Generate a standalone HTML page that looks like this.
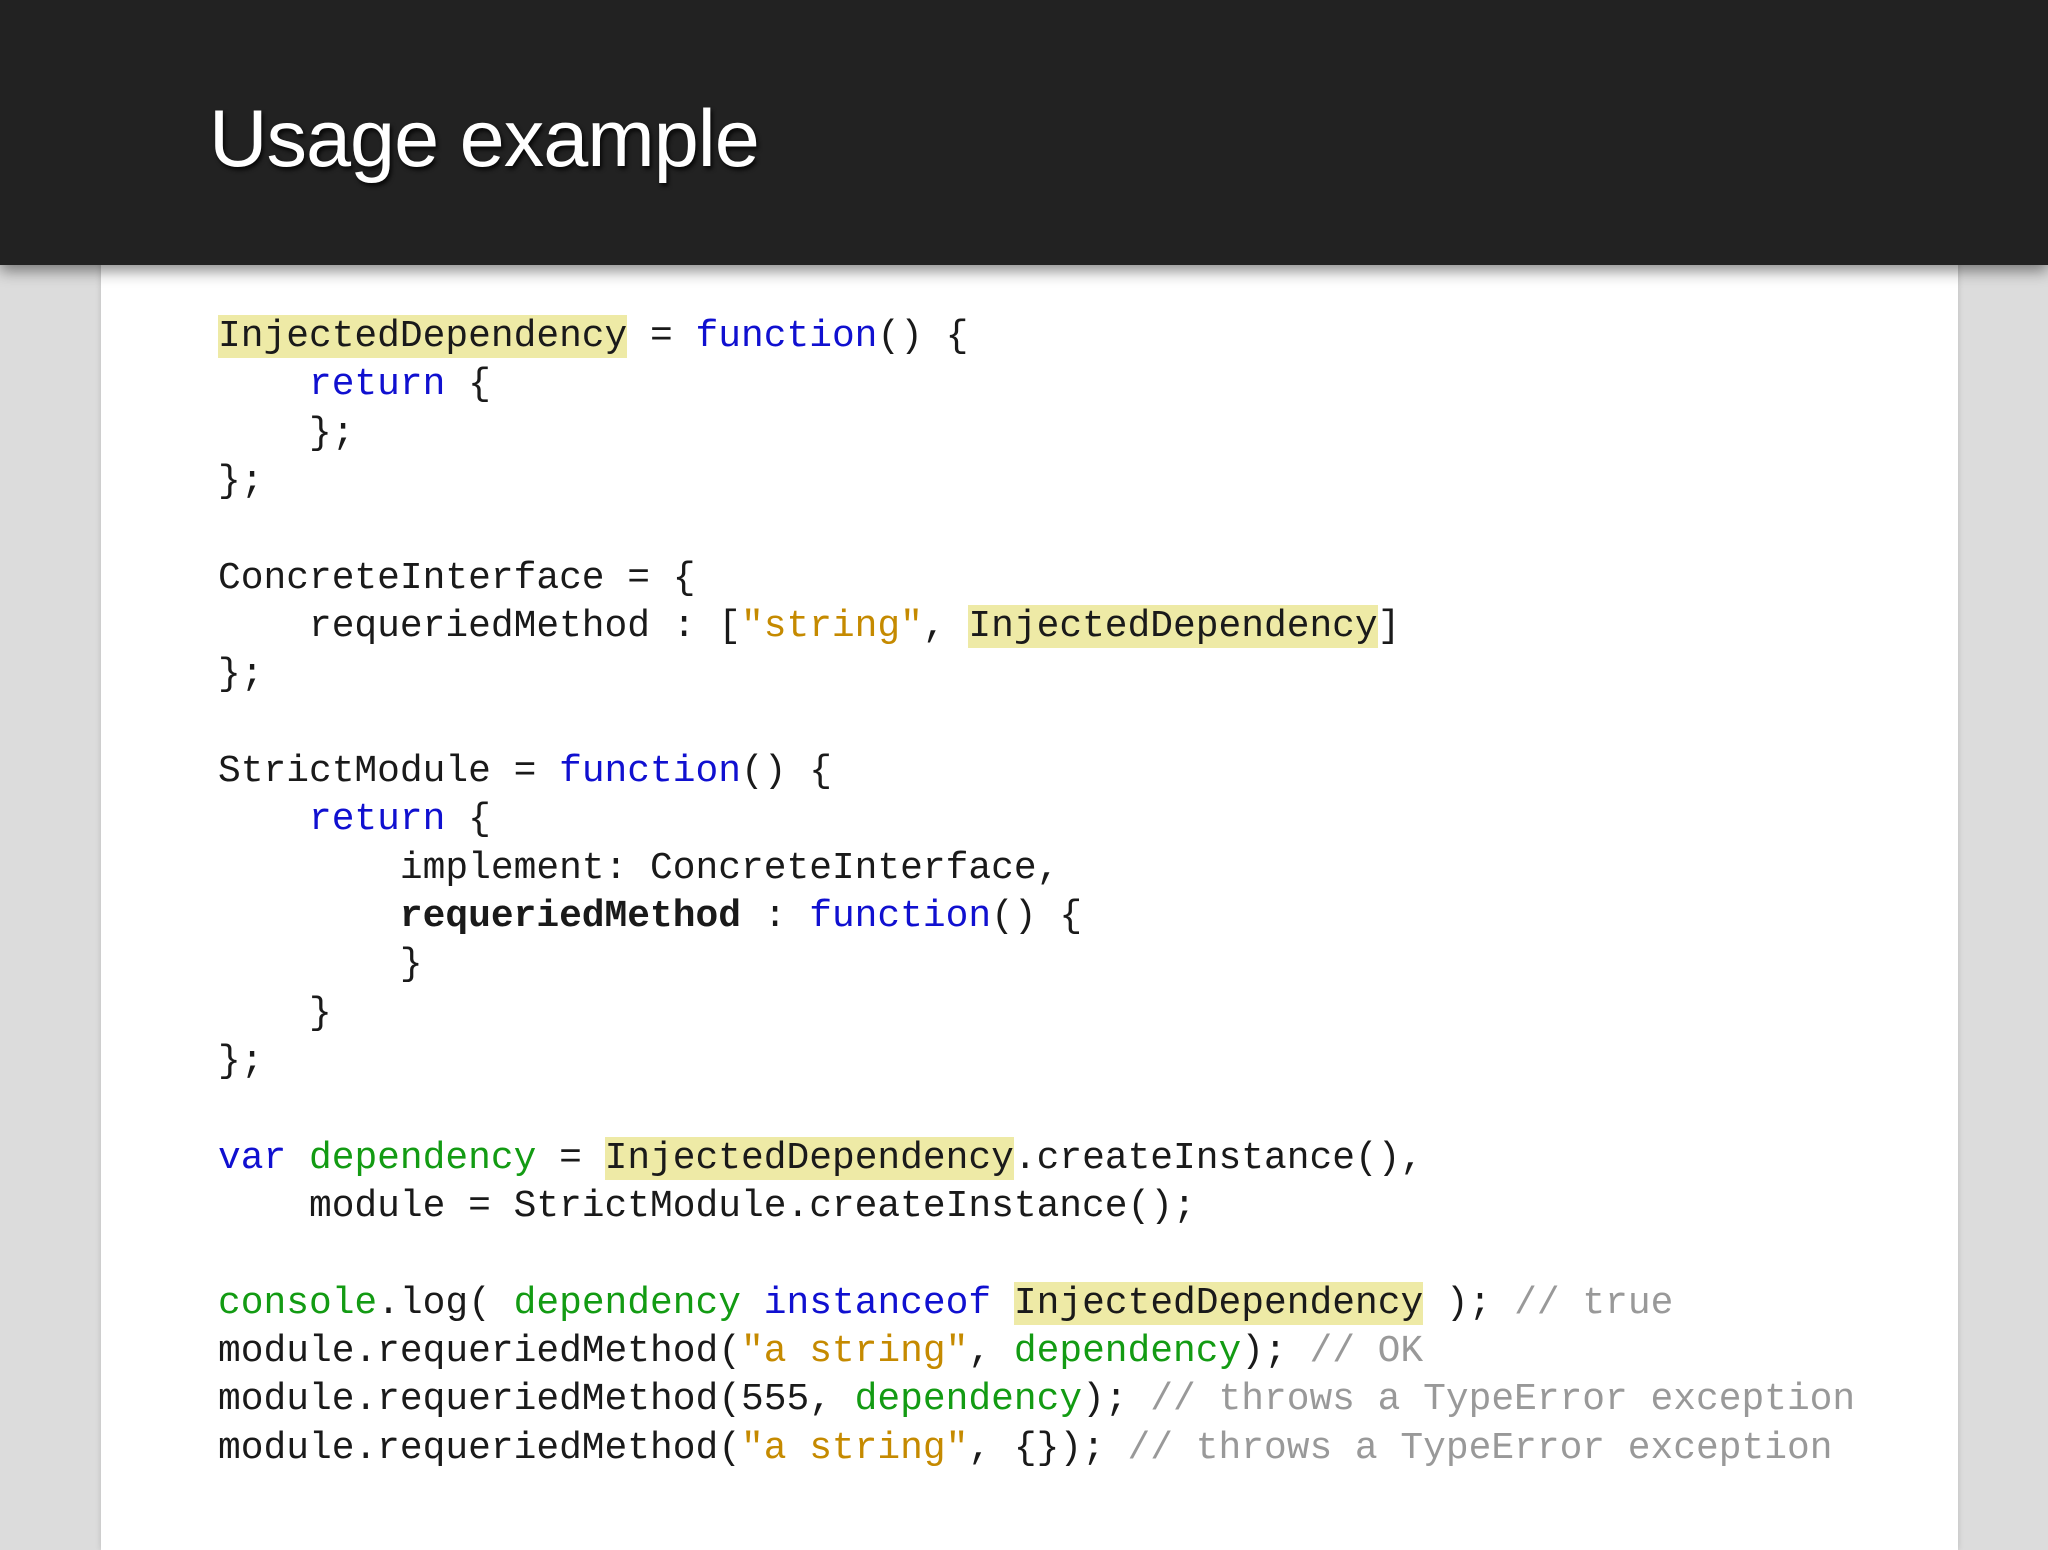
<!DOCTYPE html>
<html><head><meta charset="utf-8"><style>
body{margin:0;width:2048px;height:1536px;background:#dcdcdc;position:relative;overflow:hidden}
#hdr{position:absolute;left:0;top:0;width:2048px;height:265px;background:#222;box-shadow:0 6px 14px rgba(0,0,0,.45);z-index:2}
#title{position:absolute;left:209px;top:99px;font-family:"Liberation Sans",sans-serif;font-size:81px;color:#fff;line-height:1;text-shadow:2px 3px 4px rgba(0,0,0,.8);letter-spacing:-1px}
#panel{position:absolute;left:101px;top:250px;width:1857px;height:1300px;background:#fff;box-shadow:0 0 6px rgba(0,0,0,.15)}
pre{position:absolute;left:218px;top:313px;margin:0;font-family:"Liberation Mono",monospace;font-size:37.9px;line-height:48.33px;color:#1a1a1a;z-index:3}
.k{color:#1010d0}.g{color:#139b13}.s{color:#c58a00}.c{color:#999}.h{background:#eeeaa6}
b{font-weight:bold}
</style></head><body>
<div id="hdr"><div id="title">Usage example</div></div>
<div id="panel"></div>
<pre><span class="h">InjectedDependency</span> = <span class="k">function</span>() {
    <span class="k">return</span> {
    };
};

ConcreteInterface = {
    requeriedMethod : [<span class="s">"string"</span>, <span class="h">InjectedDependency</span>]
};

StrictModule = <span class="k">function</span>() {
    <span class="k">return</span> {
        implement: ConcreteInterface,
        <b>requeriedMethod</b> : <span class="k">function</span>() {
        }
    }
};

<span class="k">var</span> <span class="g">dependency</span> = <span class="h">InjectedDependency</span>.createInstance(),
    module = StrictModule.createInstance();

<span class="g">console</span>.log( <span class="g">dependency</span> <span class="k">instanceof</span> <span class="h">InjectedDependency</span> ); <span class="c">// true</span>
module.requeriedMethod(<span class="s">"a string"</span>, <span class="g">dependency</span>); <span class="c">// OK</span>
module.requeriedMethod(555, <span class="g">dependency</span>); <span class="c">// throws a TypeError exception</span>
module.requeriedMethod(<span class="s">"a string"</span>, {}); <span class="c">// throws a TypeError exception</span></pre>
</body></html>
